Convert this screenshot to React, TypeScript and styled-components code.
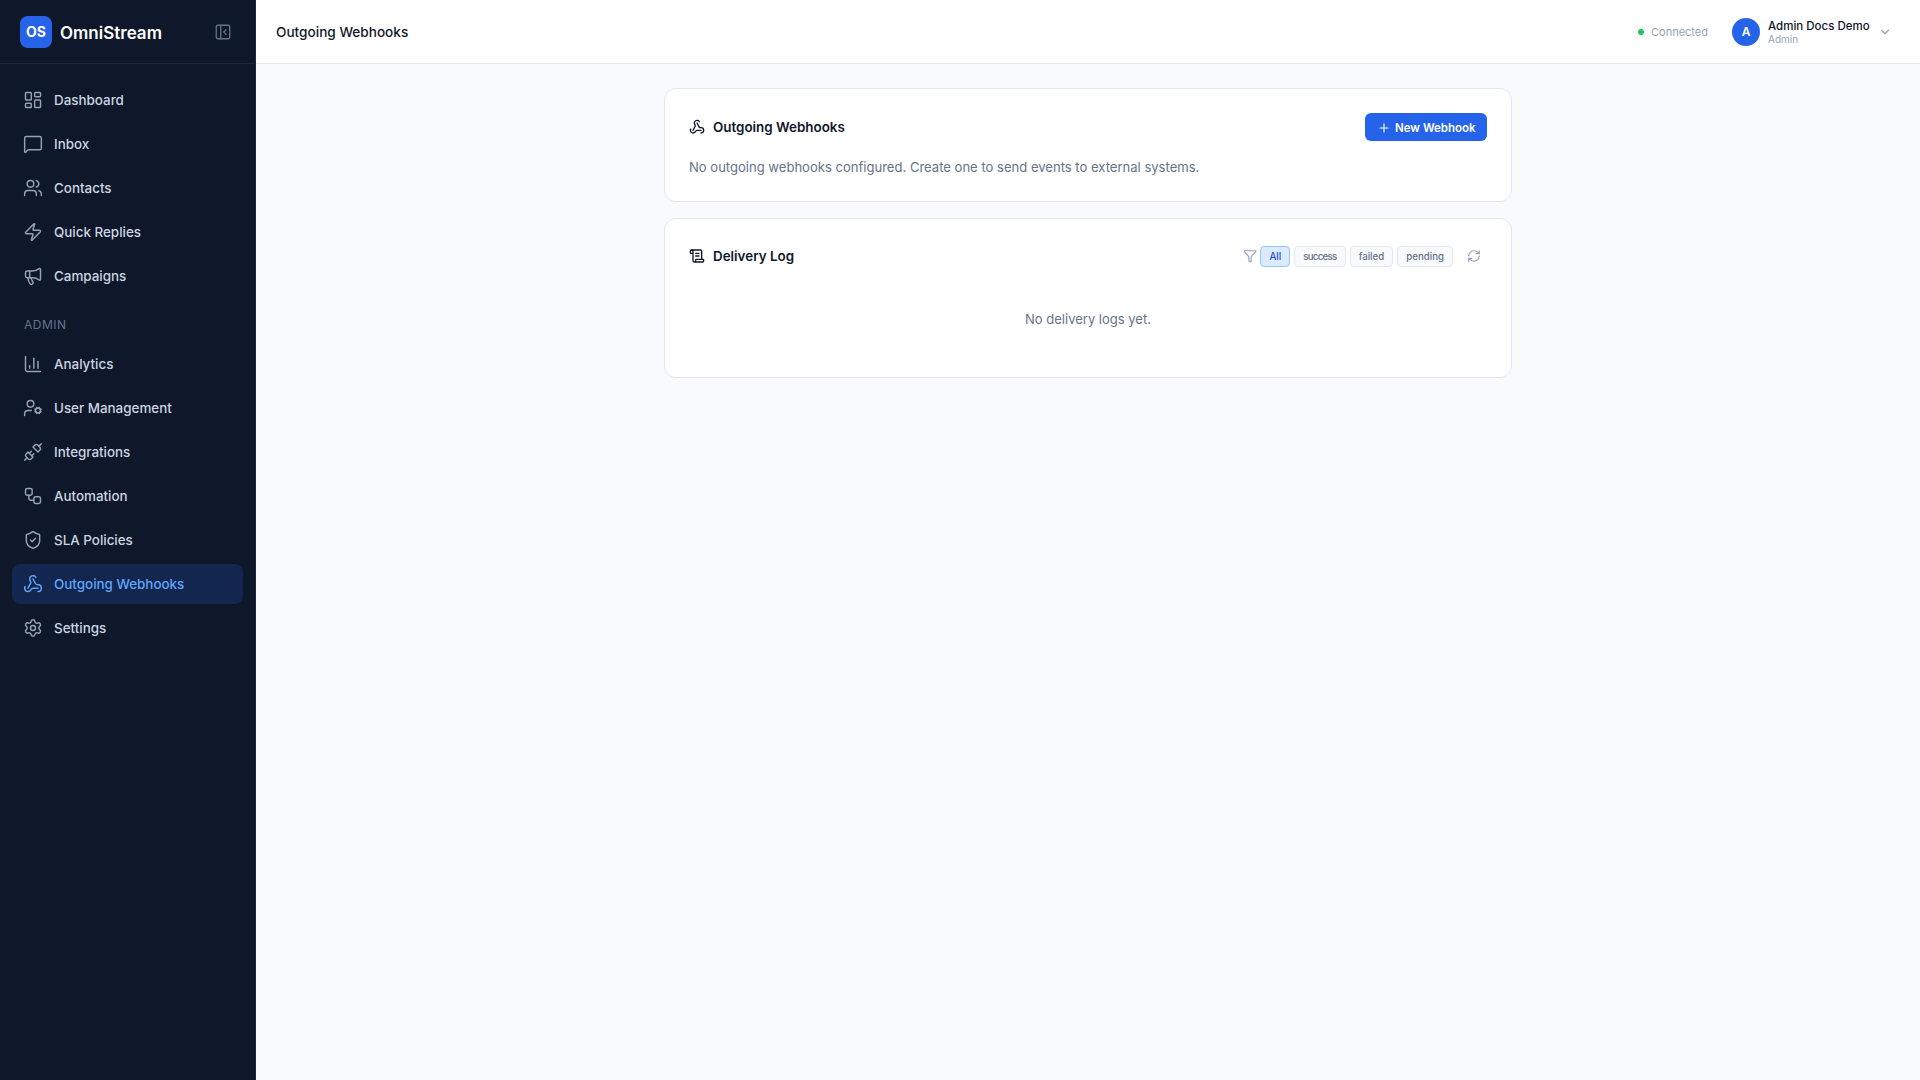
import React from "react";
import styled, { createGlobalStyle } from "styled-components";
import {
  LayoutDashboard, MessageSquare, Users, Zap, Megaphone, BarChart3, UserCog, Unplug, Workflow,
  ShieldCheck, Webhook, Settings, PanelLeftClose, ScrollText, Plus, Filter, RefreshCw, ChevronDown,
} from "lucide-react";

const Global = createGlobalStyle`
  * { box-sizing: border-box; }
  html, body { margin: 0; padding: 0; height: 100%; }
  body { font-family: Inter, "Noto Sans", sans-serif; background: #f8fafc; }
`;

const Shell = styled.div`
  display: flex;
  width: 100%;
  height: 100vh;
  overflow: hidden;
`;
const Sidebar = styled.aside`
  width: 256px;
  flex: none;
  background: #0f172a;
  border-right: 1px solid #1e293b;
  display: flex;
  flex-direction: column;
`;
const Brand = styled.div`
  height: 64px;
  flex: none;
  display: flex;
  align-items: center;
  padding: 0 23px 0 20px;
  border-bottom: 1px solid #1e293b;
`;
const LogoMark = styled.div`
  width: 32px;
  height: 32px;
  border-radius: 8px;
  background: #2563eb;
  color: #fff;
  font-size: 14px;
  font-weight: 700;
  display: flex;
  align-items: center;
  justify-content: center;
`;
const BrandName = styled.span`
  margin-left: 8px;
  padding-top: 2px;
  flex: 1;
  color: #fff;
  font-size: 17px;
  font-weight: 600;
`;
const Collapse = styled.span`
  display: flex;
  color: #64748b;
`;
const Nav = styled.nav`
  display: flex;
  flex-direction: column;
  gap: 4px;
  padding: 16px 12px;
`;
const NavRow = styled.div<{ $active?: boolean }>`
  height: 40px;
  display: flex;
  align-items: center;
  gap: 11px;
  padding: 0 11px;
  border-radius: 8px;
  font-size: 13.4px;
  font-weight: 500;
  color: ${(p) => (p.$active ? "#60a5fa" : "#cbd5e1")};
  background: ${(p) => (p.$active ? "rgba(37, 99, 235, 0.2)" : "transparent")};
  svg { flex: none; color: ${(p) => (p.$active ? "#60a5fa" : "#94a3b8")}; }
`;
const NavLabel = styled.div`
  padding: 17px 12px 7px;
  font-size: 12px;
  line-height: 16px;
  font-weight: 400;
  letter-spacing: 0.5px;
  color: #64748b;
`;
const Main = styled.div`
  flex: 1;
  min-width: 0;
  display: flex;
  flex-direction: column;
`;
const Header = styled.header`
  height: 64px;
  flex: none;
  background: #fff;
  border-bottom: 1px solid #e2e8f0;
  display: flex;
  align-items: center;
  padding: 0 28px 0 20px;
`;
const PageTitle = styled.h1`
  flex: 1;
  margin: 0;
  font-size: 13.6px;
  font-weight: 500;
  color: #0f172a;
`;
const Status = styled.div`
  display: flex;
  align-items: center;
  gap: 7px;
  font-size: 11px;
  color: #94a3b8;
`;
const Dot = styled.span`
  width: 6px;
  height: 6px;
  border-radius: 50%;
  background: #22c55e;
`;
const UserBox = styled.div`
  display: flex;
  align-items: center;
  margin-left: 24px;
  gap: 8px;
  svg { color: #94a3b8; }
`;
const Avatar = styled.div`
  width: 28px;
  height: 28px;
  border-radius: 50%;
  background: #2563eb;
  color: #fff;
  font-size: 12px;
  font-weight: 600;
  display: flex;
  align-items: center;
  justify-content: center;
`;
const UserText = styled.div`
  display: flex;
  flex-direction: column;
  width: 102px;
`;
const UserName = styled.span`
  font-size: 11.5px;
  line-height: 15px;
  font-weight: 500;
  color: #0f172a;
`;
const UserRole = styled.span`
  font-size: 10px;
  line-height: 11px;
  color: #94a3b8;
`;
const Content = styled.main`
  flex: 1;
  overflow: auto;
  padding: 24px;
`;
const Column = styled.div`
  width: 848px;
  margin: 0 auto;
  display: flex;
  flex-direction: column;
  gap: 16px;
`;
const Card = styled.section`
  background: #fff;
  border: 1px solid #e2e8f0;
  border-radius: 12px;
  padding: 24px;
`;
const CardHead = styled.div`
  display: flex;
  align-items: center;
  justify-content: space-between;
`;
const CardTitle = styled.h2`
  margin: 0;
  display: flex;
  align-items: center;
  gap: 8px;
  font-size: 13.4px;
  font-weight: 600;
  color: #0f172a;
  svg { color: #0f172a; }
`;
const PrimaryButton = styled.button`
  height: 28px;
  width: 122px;
  display: flex;
  align-items: center;
  gap: 4px;
  padding: 1px 0 0 12px;
  border: none;
  border-radius: 6px;
  background: #2563eb;
  color: #fff;
  font: 600 11.5px Inter, sans-serif;
`;
const Muted = styled.p`
  margin: 16px 0 0;
  font-size: 13.05px;
  line-height: 20px;
  color: #64748b;
`;
const Filters = styled.div`
  display: flex;
  align-items: center;
  gap: 4px;
  > svg:first-child { color: #94a3b8; margin-right: -1px; }
`;
const Chip = styled.button<{ $on?: boolean; $tight?: boolean }>`
  height: 21px;
  padding: 0 8px;
  border-radius: 4px;
  border: 1px solid ${(p) => (p.$on ? "#93c5fd" : "#e2e8f0")};
  background: ${(p) => (p.$on ? "#dbeafe" : "#f8fafc")};
  color: ${(p) => (p.$on ? "#1d4ed8" : "#64748b")};
  font: 500 9.7px Inter, sans-serif;
  letter-spacing: ${(p) => (p.$tight ? "-0.7px" : "0")};
`;
const Refresh = styled.span`
  display: flex;
  margin-left: 4px;
  padding: 6px;
  color: #94a3b8;
`;
const Empty = styled.div`
  padding: 40px 0 24px;
  text-align: center;
  font-size: 13px;
  line-height: 20px;
  color: #64748b;
`;

const main = [
  ["Dashboard", LayoutDashboard], ["Inbox", MessageSquare], ["Contacts", Users],
  ["Quick Replies", Zap], ["Campaigns", Megaphone],
] as const;
const admin = [
  ["Analytics", BarChart3], ["User Management", UserCog], ["Integrations", Unplug], ["Automation", Workflow],
  ["SLA Policies", ShieldCheck], ["Outgoing Webhooks", Webhook], ["Settings", Settings],
] as const;

export default function App() {
  return (
    <Shell>
      <Global />
      <Sidebar>
        <Brand>
          <LogoMark>OS</LogoMark>
          <BrandName>OmniStream</BrandName>
          <Collapse><PanelLeftClose size={18} strokeWidth={1.75} /></Collapse>
        </Brand>
        <Nav>
          {main.map(([label, Icon]) => (
            <NavRow key={label}><Icon size={20} strokeWidth={1.75} />{label}</NavRow>
          ))}
          <NavLabel>ADMIN</NavLabel>
          {admin.map(([label, Icon]) => (
            <NavRow key={label} $active={label === "Outgoing Webhooks"}><Icon size={20} strokeWidth={1.75} />{label}</NavRow>
          ))}
        </Nav>
      </Sidebar>
      <Main>
        <Header>
          <PageTitle>Outgoing Webhooks</PageTitle>
          <Status><Dot />Connected</Status>
          <UserBox>
            <Avatar>A</Avatar>
            <UserText><UserName>Admin Docs Demo</UserName><UserRole>Admin</UserRole></UserText>
            <ChevronDown size={14} />
          </UserBox>
        </Header>
        <Content>
          <Column>
            <Card>
              <CardHead>
                <CardTitle><Webhook size={16} />Outgoing Webhooks</CardTitle>
                <PrimaryButton><Plus size={14} />New Webhook</PrimaryButton>
              </CardHead>
              <Muted>No outgoing webhooks configured. Create one to send events to external systems.</Muted>
            </Card>
            <Card>
              <CardHead>
                <CardTitle><ScrollText size={16} />Delivery Log</CardTitle>
                <Filters>
                  <Filter size={14} />
                  <Chip $on>All</Chip><Chip $tight>success</Chip><Chip>failed</Chip><Chip>pending</Chip>
                  <Refresh><RefreshCw size={14} /></Refresh>
                </Filters>
              </CardHead>
              <Empty>No delivery logs yet.</Empty>
            </Card>
          </Column>
        </Content>
      </Main>
    </Shell>
  );
}
